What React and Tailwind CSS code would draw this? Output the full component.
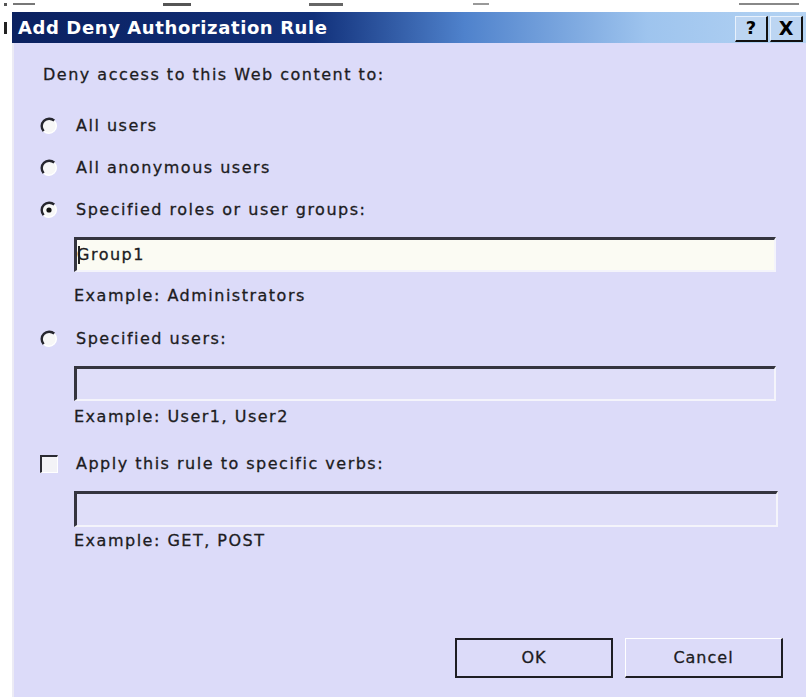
import React from "react";

const FONT = "font-['DejaVu_Sans',sans-serif]";
const TEXT = "text-[16px] tracking-[1.5px] leading-5 text-[#1c1c22] [-webkit-text-stroke:0.3px_#1c1c22]";

// Classic sunken radio button
function Radio({ checked }) {
  return (
    <svg width="18" height="18" viewBox="0 0 18 18" className="shrink-0">
      <circle cx="9" cy="9" r="7.5" fill="#f7f7f7" />
      <path d="M14.3 3.7 A7.5 7.5 0 0 0 3.7 14.3" stroke="#26262e" strokeWidth="2.4" fill="none" />
      <path d="M3.7 14.3 A7.5 7.5 0 0 0 14.3 3.7" stroke="#ffffff" strokeWidth="1.4" fill="none" />
      {checked && <circle cx="9" cy="9" r="2.6" fill="#111" />}
    </svg>
  );
}

function Field({ value, enabled, wide }) {
  return (
    <div
      className={`ml-[34px] ${wide ? "w-[704px] h-[36px]" : "w-[702px] h-[35px]"} border-t-[3px] border-l-[3px] border-[#34343f] border-r-2 border-b-2 border-r-[#f4f4fb] border-b-[#f4f4fb] flex items-center ${
        enabled ? "bg-[#fbfbf3]" : "bg-[#dfdef9]"
      }`}
    >
      {value && (
        <div className="flex items-center pl-[1px]">
          <span className="w-[2px] h-[18px] bg-[#222] -mr-[3px]" />
          <span className={TEXT}>{value}</span>
        </div>
      )}
    </div>
  );
}

function Hint({ children, className = "" }) {
  return <div className={`ml-[34px] ${TEXT} ${className}`}>{children}</div>;
}

function Choice({ checked, label, className = "" }) {
  return (
    <div className={`flex items-center h-5 ${className}`}>
      <Radio checked={checked} />
      <span className={`ml-[18px] ${TEXT}`}>{label}</span>
    </div>
  );
}

const captionButton =
  "w-[33px] h-[26px] flex items-center justify-center bg-[#bcd5f2] border-t border-l border-[#e8f1fc] border-r-2 border-b-2 border-r-[#111] border-b-[#111] font-bold text-black leading-none";

export default function App() {
  return (
    <div className={`w-[806px] h-[700px] bg-white overflow-hidden flex flex-col ${FONT}`}>
      {/* edge of the window behind */}
      <div className="h-[12px] flex items-start pt-[3px]">
        <span className="ml-[4px] w-[3px] h-[3px] bg-[#555]" />
        <span className="ml-[6px] w-[22px] h-[2px] bg-[#777]" />
        <span className="ml-[128px] w-[28px] h-[3px] bg-[#555]" />
        <span className="ml-[118px] w-[34px] h-[3px] bg-[#666]" />
        <span className="ml-[130px] w-[16px] h-[2px] bg-[#999]" />
        <span className="ml-[250px] w-[60px] h-[2px] bg-[#888]" />
      </div>

      <div className="flex flex-1 min-h-0">
        <div className="w-[12px] flex flex-col">
          <span className="mt-[10px] ml-[4px] w-[3px] h-[12px] bg-[#222]" />
        </div>

        <div className="flex-1 flex flex-col h-[685px]">
          {/* title bar */}
          <div className="h-[31px] flex items-center bg-[linear-gradient(90deg,#0b2160_0%,#11307a_38%,#4f82cc_57%,#9ec4ee_80%,#b4d3f3_100%)]">
            <span className="ml-[6px] text-[18px] font-bold text-white tracking-[0.6px] leading-none">
              Add Deny Authorization Rule
            </span>
            <div className="ml-auto mr-[3px] flex gap-[2px] mt-[2px]">
              <div className={`${captionButton} text-[18px]`}>?</div>
              <div className={`${captionButton} text-[19px]`}>X</div>
            </div>
          </div>

          {/* dialog body */}
          <div className="flex-1 flex flex-col bg-[#dcdbf9] border-l-2 border-[#ecebf5] pl-[26px]">
            <div className={`mt-[22px] ml-[3px] ${TEXT}`}>Deny access to this Web content to:</div>

            <Choice label="All users" className="mt-[31px]" />
            <Choice label="All anonymous users" className="mt-[22px]" />
            <Choice checked label="Specified roles or user groups:" className="mt-[22px]" />

            <div className="mt-[17px]">
              <Field value="Group1" enabled />
            </div>
            <Hint className="mt-[14px]">Example: Administrators</Hint>

            <Choice label="Specified users:" className="mt-[23px]" />
            <div className="mt-[17px]">
              <Field />
            </div>
            <Hint className="mt-[6px]">Example: User1, User2</Hint>

            <div className="flex items-center h-5 mt-[27px]">
              <div className="w-[18px] h-[18px] bg-[#f3f3f7] border-t-2 border-l-2 border-[#2b2b33] border-r border-b border-r-white border-b-white" />
              <span className={`ml-[18px] ${TEXT}`}>Apply this rule to specific verbs:</span>
            </div>
            <div className="mt-[17px]">
              <Field wide />
            </div>
            <Hint className="mt-[4px]">Example: GET, POST</Hint>

            <div className="mt-auto mb-[19px] flex justify-end pr-[23px] gap-[12px]">
              <button className={`w-[158px] h-[40px] border-2 border-[#1e1e24] bg-[#dcdbf9] ${TEXT} tracking-[1px]`}>
                OK
              </button>
              <button
                className={`w-[158px] h-[40px] border-t border-l border-white border-r-2 border-b-2 border-r-[#1e1e24] border-b-[#1e1e24] bg-[#dcdbf9] ${TEXT} tracking-[1px]`}
              >
                Cancel
              </button>
            </div>
          </div>
        </div>
      </div>
      <div className="h-[3px] bg-white" />
    </div>
  );
}
